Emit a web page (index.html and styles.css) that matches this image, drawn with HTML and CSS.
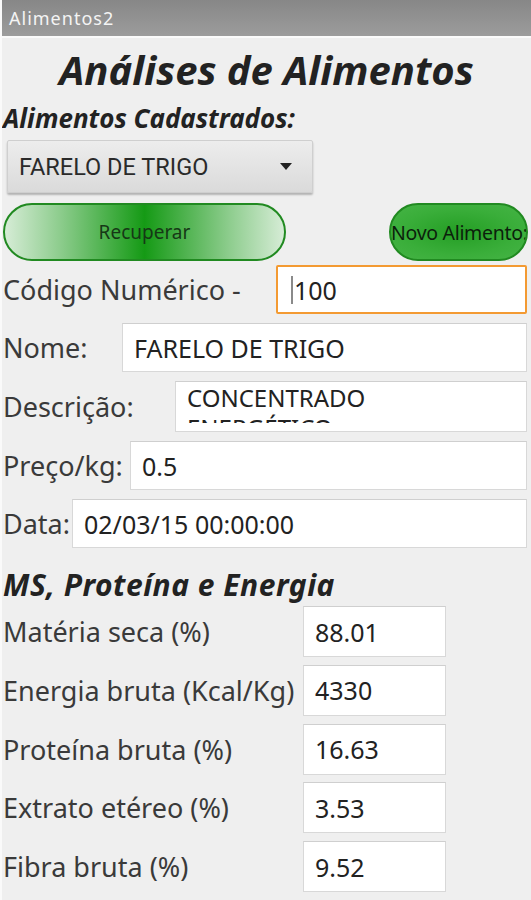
FILE: index.html
```html
<html>
  <head>
    <meta charset="utf-8">
    <link rel="stylesheet" href="styles.css">
    <title>Alimentos2</title>
  </head>
  <body>
    <div class="app">
      <div class="titlebar">Alimentos2</div>

      <h1 class="title">Análises de Alimentos</h1>
      <h2 class="subtitle">Alimentos Cadastrados:</h2>

      <div class="spinner">
        <span>FARELO DE TRIGO</span>
        <span class="arrow"></span>
      </div>

      <div class="buttons">
        <div class="btn btn-recuperar">Recuperar</div>
        <div class="btn btn-novo"><span>Novo Alimento:</span></div>
      </div>

      <div class="row">
        <div class="label w-codigo">Código Numérico -</div>
        <div class="field focused"><span class="cursor"></span>100</div>
      </div>
      <div class="row">
        <div class="label w-nome">Nome:</div>
        <div class="field">FARELO DE TRIGO</div>
      </div>
      <div class="row">
        <div class="label w-desc">Descrição:</div>
        <div class="field multi"><div class="clip">CONCENTRADO<br>ENERGÉTICO</div></div>
      </div>
      <div class="row">
        <div class="label w-preco">Preço/kg:</div>
        <div class="field">0.5</div>
      </div>
      <div class="row">
        <div class="label w-data">Data:</div>
        <div class="field">02/03/15 00:00:00</div>
      </div>

      <h2 class="section">MS, Proteína e Energia</h2>

      <div class="nutri">
        <div class="nrow">
          <div class="label">Matéria seca (%)</div>
          <div class="field small">88.01</div>
        </div>
        <div class="nrow">
          <div class="label">Energia bruta (Kcal/Kg)</div>
          <div class="field small">4330</div>
        </div>
        <div class="nrow">
          <div class="label">Proteína bruta (%)</div>
          <div class="field small">16.63</div>
        </div>
        <div class="nrow">
          <div class="label">Extrato etéreo (%)</div>
          <div class="field small">3.53</div>
        </div>
        <div class="nrow">
          <div class="label">Fibra bruta (%)</div>
          <div class="field small">9.52</div>
        </div>
        <div class="nrow">
          <div class="field small"></div>
        </div>
      </div>
    </div>
  </body>
</html>
```

FILE: styles.css
```css
body {
  margin: 0;
  background: #efefef;
  font-family: "Noto Sans", "DejaVu Sans", sans-serif;
  color: #3a3a3a;
}

.app {
  border-left: 2px solid #fafafa;
  height: 900px;
  overflow: hidden;
  background: #efefef;
}

.titlebar {
  height: 36px;
  display: flex;
  align-items: center;
  padding-left: 7px;
  background: linear-gradient(#878787, #9c9c9c);
  color: #f4f4f4;
  font-size: 18px;
  letter-spacing: 1px;
  border-bottom: 2px solid #fafafa;
}

.title {
  margin: 0;
  padding-top: 8px;
  text-align: center;
  font-size: 40px;
  font-style: italic;
  font-weight: bold;
  line-height: 48px;
  color: #222;
}

.subtitle {
  margin: 8px 0 0 1px;
  font-size: 26px;
  font-style: italic;
  font-weight: bold;
  line-height: 32px;
  color: #222;
}

.spinner {
  margin: 6px 0 0 5px;
  width: 306px;
  height: 53px;
  box-sizing: border-box;
  display: flex;
  align-items: center;
  justify-content: space-between;
  padding: 0 20px 0 11px;
  background: linear-gradient(#ededed, #dadada);
  border: 1px solid #cfcfcf;
  border-radius: 2px;
  box-shadow: 0 2px 2px rgba(0, 0, 0, 0.25);
  font-family: Roboto, "Noto Sans", sans-serif;
  font-size: 23.5px;
  color: #2a2a2a;
}

.arrow {
  width: 0;
  height: 0;
  border-left: 6px solid transparent;
  border-right: 6px solid transparent;
  border-top: 7px solid #222;
}

.buttons {
  margin: 10px 3px 0 1px;
  display: flex;
  justify-content: space-between;
  align-items: center;
}

.btn {
  box-sizing: border-box;
  height: 58px;
  border: 2px solid #218a21;
  border-radius: 29px;
  display: flex;
  align-items: center;
  justify-content: center;
  font-size: 19px;
  color: #163816;
}

.btn-recuperar {
  width: 283px;
  background: linear-gradient(to right, #d6ecd6 0%, #8ccc8c 20%, #159a15 50%, #8ccc8c 80%, #d6ecd6 100%);
}

.btn-novo {
  width: 139px;
  overflow: hidden;
  justify-content: flex-start;
  padding-left: 0;
  background: radial-gradient(ellipse at center, #249e24 0%, #3aae3a 60%, #46b446 100%);
  color: #0c1f0c;
  font-size: 19.5px;
  letter-spacing: -0.3px;
  white-space: nowrap;
}

.row {
  display: flex;
  align-items: center;
  margin: 9px 4px 0 1px;
}

.buttons + .row {
  margin-top: 4px;
}

.label {
  flex: none;
  font-size: 27px;
  white-space: nowrap;
  color: #3a3a3a;
}

.w-codigo { width: 273px; }
.w-nome { width: 119px; }
.w-desc { width: 172px; }
.w-preco { width: 127px; }
.w-data { width: 69px; }

.field {
  flex: 1;
  box-sizing: border-box;
  height: 49px;
  display: flex;
  align-items: center;
  padding-left: 11px;
  background: #fff;
  border: 1px solid #d8d8d8;
  border-top-color: #cfcfcf;
  font-size: 25px;
  color: #222;
  white-space: nowrap;
}

.field.focused {
  border: 2px solid #f39a32;
  border-radius: 2px;
  padding-left: 13px;
}

.cursor {
  width: 2px;
  height: 28px;
  background: #8a8a8a;
  margin-right: 1px;
}

.field.multi {
  height: 51px;
  align-items: flex-start;
  padding-top: 1px;
}

.clip {
  height: 40px;
  overflow: hidden;
  line-height: 30px;
  font-size: 24px;
}

.section {
  margin: 19px 0 0 1px;
  font-size: 30px;
  font-style: italic;
  font-weight: bold;
  letter-spacing: 0.5px;
  line-height: 36px;
  color: #222;
}

.nutri {
  margin-top: 3px;
  display: flex;
  flex-direction: column;
  gap: 7.75px;
}

.nrow {
  display: flex;
  align-items: center;
  padding-left: 1px;
}

.nrow .label {
  width: 300px;
}

.nrow .field.small:only-child {
  margin-left: 300px;
}

.field.small {
  flex: none;
  width: 143px;
  height: 51px;
}
```
